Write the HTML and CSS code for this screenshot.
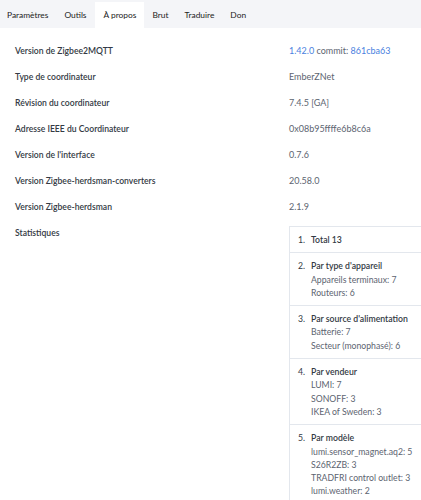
FILE: index.html
```html
<!DOCTYPE html>
<html lang="fr">
<head>
    <meta charset="UTF-8">
    <title>À propos</title>
    <link rel="stylesheet" href="styles.css">
</head>
<body>
    <div class="tabs">
        <div class="tab">Paramètres</div>
        <div class="tab">Outils</div>
        <div class="tab active">À propos</div>
        <div class="tab">Brut</div>
        <div class="tab">Traduire</div>
        <div class="tab">Don</div>
    </div>

    <div class="info">
        <div class="label">Version de Zigbee2MQTT</div>
        <div class="value"><a href="#">1.42.0</a> commit: <a href="#">861cba63</a></div>

        <div class="label">Type de coordinateur</div>
        <div class="value">EmberZNet</div>

        <div class="label">Révision du coordinateur</div>
        <div class="value">7.4.5 [GA]</div>

        <div class="label">Adresse IEEE du Coordinateur</div>
        <div class="value">0x08b95ffffe6b8c6a</div>

        <div class="label">Version de l'interface</div>
        <div class="value">0.7.6</div>

        <div class="label">Version Zigbee-herdsman-converters</div>
        <div class="value">20.58.0</div>

        <div class="label">Version Zigbee-herdsman</div>
        <div class="value">2.1.9</div>

        <div class="label">Statistiques</div>
        <div class="value">
            <ol class="stats">
                <li><span class="stat-title">Total 13</span></li>
                <li>
                    <span class="stat-title">Par type d'appareil</span>
                    <ul>
                        <li>Appareils terminaux: 7</li>
                        <li>Routeurs: 6</li>
                    </ul>
                </li>
                <li>
                    <span class="stat-title">Par source d'alimentation</span>
                    <ul>
                        <li>Batterie: 7</li>
                        <li>Secteur (monophasé): 6</li>
                    </ul>
                </li>
                <li>
                    <span class="stat-title">Par vendeur</span>
                    <ul>
                        <li>LUMI: 7</li>
                        <li>SONOFF: 3</li>
                        <li>IKEA of Sweden: 3</li>
                    </ul>
                </li>
                <li>
                    <span class="stat-title">Par modèle</span>
                    <ul>
                        <li>lumi.sensor_magnet.aq2: 5</li>
                        <li>S26R2ZB: 3</li>
                        <li>TRADFRI control outlet: 3</li>
                        <li>lumi.weather: 2</li>
                    </ul>
                </li>
            </ol>
        </div>
    </div>
</body>
</html>
```

FILE: styles.css
```css
body {
    font-family: Lato, "Open Sans", sans-serif;
    font-size: 9px;
    color: #333a44;
    background-color: #fff;
    margin: 0;
    padding: 0;
    overflow: hidden;
}

.tabs {
    display: flex;
    height: 28px;
    padding-top: 2px;
    box-sizing: border-box;
    background-color: #f4f5f8;
}

.tab {
    display: flex;
    align-items: center;
    padding: 0 8px;
    font-size: 8.4px;
    color: #222;
}

.tab:first-child {
    padding-left: 7px;
}

.tab.active {
    padding-left: 9px;
    background-color: #fff;
}

.info {
    display: grid;
    grid-template-columns: 289px 200px;
    margin-top: 10px;
}

.label,
.value {
    padding: 6px 0;
    line-height: 14px;
}

.label {
    padding-left: 15px;
    font-size: 8.6px;
    color: #333a44;
    font-weight: 600;
}

.value {
    color: #5c6470;
}

.value a {
    color: #4a7fe0;
    text-decoration: none;
}

.stats {
    margin: 0;
    padding: 0;
    list-style: none;
    counter-reset: stat;
    border: 1px solid #e3e7ed;
    border-right: none;
    font-size: 8.7px;
}

.stats > li {
    counter-increment: stat;
    padding: 6px 0 6px 21px;
    line-height: 13.3px;
    border-top: 1px solid #e3e7ed;
    position: relative;
}

.stats > li:first-child {
    border-top: none;
}

.stats > li::before {
    content: counter(stat) ".";
    position: absolute;
    left: 8px;
    color: #333a44;
}

.stat-title {
    color: #333a44;
    font-weight: 600;
}

.stats ul {
    margin: 0;
    padding: 0;
    list-style: none;
}
```
